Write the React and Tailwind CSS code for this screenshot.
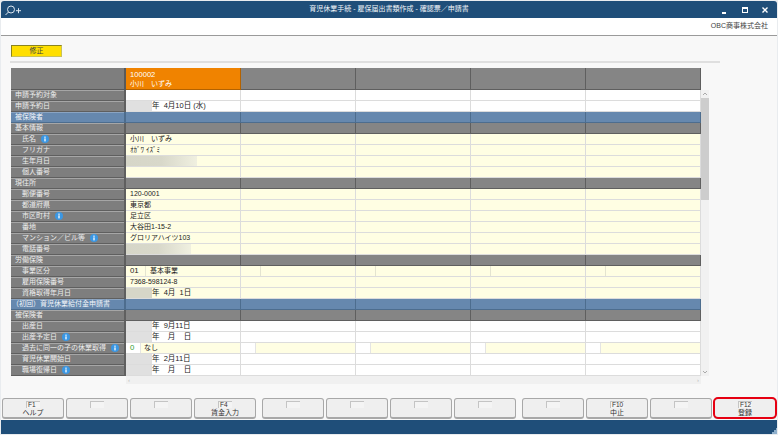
const INFO = true;
const rows = [
  { label: "申請予約対象", kind: "white" },
  { label: "申請予約日", kind: "date", value: "年  4月10日 (水)" },
  { label: "被保険者", kind: "blue" },
  { label: "基本情報", kind: "section" },
  { label: "氏名", kind: "yellow", indent: true, info: INFO, value: "小川　いずみ" },
  { label: "フリガナ", kind: "yellow", indent: true, value: "ｵｶﾞﾜ ｲｽﾞﾐ", size: "text-[6px]" },
  { label: "生年月日", kind: "masked", indent: true, mask: "w-[71px]" },
  { label: "個人番号", kind: "yellow", indent: true },
  { label: "現住所", kind: "section" },
  { label: "郵便番号", kind: "yellow", indent: true, value: "120-0001", size: "text-[7.8px]" },
  { label: "都道府県", kind: "yellow", indent: true, value: "東京都" },
  { label: "市区町村", kind: "yellow", indent: true, info: INFO, value: "足立区" },
  { label: "番地", kind: "yellow", indent: true, value: "大谷田1-15-2" },
  { label: "マンション／ビル等", kind: "yellow", indent: true, info: INFO, value: "グロリアハイツ103" },
  { label: "電話番号", kind: "masked", indent: true, mask: "w-[65px]" },
  { label: "労働保険", kind: "section" },
  { label: "事業区分", kind: "code", indent: true, code: "01", value: "基本事業" },
  { label: "雇用保険番号", kind: "yellow", indent: true, value: "7368-598124-8", size: "text-[7.8px]" },
  { label: "資格取得年月日", kind: "dateYellow", indent: true, value: "年  4月  1日" },
  { label: "（初回）育児休業給付金申請書", kind: "blue", wide: true },
  { label: "被保険者", kind: "section" },
  { label: "出産日", kind: "date", indent: true, value: "年  9月11日" },
  { label: "出産予定日", kind: "date", indent: true, info: INFO, value: "年    月    日" },
  { label: "過去に同一の子の休業取得", kind: "flag", indent: true, info: INFO, code: "0", value: "なし" },
  { label: "育児休業開始日", kind: "date", indent: true, value: "年  2月11日" },
  { label: "職場復帰日", kind: "date", indent: true, info: INFO, value: "年    月    日" },
];

const keys = [
  [{ f: "F1", label: "ヘルプ" }, {}, {}, { f: "F4", label: "賃金入力" }],
  [{}, {}, {}, {}],
  [{}, { f: "F10", label: "中止" }, {}, { f: "F12", label: "登録", hot: true }],
];

function InfoIcon() {
  return (
    <svg viewBox="0 0 10 10" className="ml-[5px] h-[8px] w-[8px] shrink-0">
      <circle cx="5" cy="5" r="5" fill="#3b97e3" />
      <rect x="4.2" y="4.2" width="1.6" height="3.8" fill="#fff" />
      <rect x="4.2" y="2" width="1.6" height="1.5" fill="#fff" />
    </svg>
  );
}

function Cell({ row, first }) {
  const base = "h-[11px] w-[115px] shrink-0 overflow-hidden border-b border-r border-[#dcdcdc] text-[7px] leading-[10px] text-[#222] whitespace-pre";

  if (row.kind === "blue") return <div className="h-[11px] w-[115px] shrink-0 border-r border-b border-[#4d6d8e] bg-[#6688ae]" />;
  if (row.kind === "section") return <div className="h-[11px] w-[115px] shrink-0 border-r border-b border-[#5f5f5f] bg-[#858585]" />;
  if (row.kind === "white") return <div className={`${base} bg-white`} />;
  if (row.kind === "yellow") {
    return <div className={`${base} bg-[#fffee3] pl-[4px] ${row.size || ""}`}>{first ? row.value : ""}</div>;
  }
  if (row.kind === "masked") {
    return (
      <div className={`${base} bg-[#fffee3]`}>
        {first && <div className={`h-[10px] ${row.mask} bg-gradient-to-r from-[#d6d6c8] via-[#d8d8ca] to-[#f0f0e0]`} />}
      </div>
    );
  }
  if (row.kind === "date" || row.kind === "dateYellow") {
    const bg = row.kind === "date" ? "bg-white" : "bg-[#fffee3]";
    return (
      <div className={`${base} ${bg}`}>
        {first && (
          <div className="flex">
            <div className={`h-[10px] w-[26px] shrink-0 ${row.kind === "date" ? "bg-[#e0e0e0]" : "bg-[#d6d6c8]"}`} />
            <span className="text-[7.5px]">{row.value}</span>
          </div>
        )}
      </div>
    );
  }
  if (row.kind === "code") {
    return (
      <div className={`${base} flex bg-[#fffee3]`}>
        <div className="h-[10px] w-[20px] shrink-0 border-r border-[#e4e4d0] pl-[4px] text-[7.8px]">{first ? row.code : ""}</div>
        <div className="pl-[4px]">{first ? row.value : ""}</div>
      </div>
    );
  }
  return (
    <div className={`${base} flex bg-[#fffee3]`}>
      <div className="h-[10px] w-[15px] shrink-0 border-r border-[#e4e4e4] bg-white pl-[4px] text-[7.8px] text-[#2e9e2e]">{first ? row.code : ""}</div>
      <div className="pl-[3px]">{first ? row.value : ""}</div>
    </div>
  );
}

function Row({ row }) {
  const labelBg = row.kind === "blue"
    ? "bg-[#6688ae] text-[#f2f5f9] border-[#4d6d8e] shadow-[inset_0_1px_0_#8aa4c2]"
    : "bg-[#7e7e7e] text-[#ededed] border-[#5f5f5f] shadow-[inset_0_1px_0_#a6a6a6]";
  return (
    <div className="flex">
      <div className={`flex h-[11px] w-[115px] shrink-0 items-center overflow-hidden whitespace-nowrap border-b border-r-2 pb-px text-[7px] leading-none ${labelBg} ${row.indent ? "pl-[11px]" : row.wide ? "pl-px" : "pl-[4px]"}`}>
        {row.label}
        {row.info && <InfoIcon />}
      </div>
      {[0, 1, 2, 3, 4].map((i) => (
        <Cell key={i} row={row} first={i === 0} />
      ))}
    </div>
  );
}

function FKey({ item }) {
  return (
    <button className="relative flex h-[21px] w-[62px] shrink-0 flex-col items-center rounded-[3px] border border-b-2 border-[#a8a8a8] bg-[#efefef] text-[#333]">
      <span className="mt-[2px] h-[7px] w-[14px] border-l border-t border-[#c4c4c4] bg-[#f4f4f4] px-px text-left text-[6.5px] leading-[6px]">{item.f || ""}</span>
      <span className="text-[7px] leading-[9px]">{item.label || ""}</span>
      {item.hot && <span className="absolute -inset-[2px] rounded-[5px] border-[2.5px] border-[#e60012]" />}
    </button>
  );
}

export default function App() {
  return (
    <div className="h-[435px] w-[778px] overflow-hidden bg-[#e9ecef] pl-px pt-[1px] font-['Liberation_Sans','Noto_Sans_CJK_JP',sans-serif]">
      <div className="flex h-[433px] w-[776px] flex-col overflow-hidden rounded-t-[3px] bg-[#f8f8f8]">
        {/* title bar */}
        <div className="relative flex h-[17px] shrink-0 items-center justify-center whitespace-pre bg-[#1f4e79] text-[7px] text-[#f0f4f8]">
          <svg viewBox="0 0 18 13" className="absolute left-[4px] top-[2px] h-[13px] w-[18px]" fill="none" stroke="#dfe8f0" strokeWidth="1">
            <circle cx="6" cy="6.5" r="3.5" />
            <path d="M3.5 9 .5 12M11 7.7h5M13.5 5.2v5" />
          </svg>
          育児休業手続 - 雇保届出書類作成 - 確認票／申請書
          <div className="absolute right-[9px] top-0 flex h-[17px] items-center">
            <span className="mt-[7px] h-[1.5px] w-[4px] bg-white" />
            <span className="ml-[16px] h-[6px] w-[6px] border border-t-2 border-white" />
            <svg viewBox="0 0 6 6" className="ml-[14px] h-[6px] w-[6px]" stroke="#fff" strokeWidth="1.4">
              <path d="M.5.5l5 5M5.5.5l-5 5" />
            </svg>
          </div>
        </div>

        {/* company bar */}
        <div className="flex h-[18px] shrink-0 items-center justify-end border-b border-[#9a9a9a] bg-white pr-[9px] text-[7px] text-[#444]">
          OBC商事株式会社
        </div>

        {/* edit button */}
        <div className="flex shrink-0 flex-col px-[9px] pt-[9px]">
          <div className="ml-px flex h-[12px] w-[51px] items-center justify-center border border-[#c9c25a] border-l-[#8a8420] border-t-[#8a8420] bg-[#ffdf00] text-[7px] text-[#444]">
            修正
          </div>
          <div className="mt-[4px] h-[2px] w-[710px] bg-[#dfdfdf]" />
        </div>

        {/* table */}
        <div className="mt-[5px] flex shrink-0 pl-[10px]">
          <div className="flex w-[690px] flex-col">
            <div className="flex h-[22px]">
              <div className="w-[115px] border-b border-r-2 border-[#5a5a5a] bg-[#7e7e7e]" />
              <div className="w-[115px] border-b border-r border-[#b36200] bg-[#f08300] pl-[4px] pt-[2px] text-[7px] leading-[9px] text-white">
                <div className="text-[7.6px]">100002</div>
                <div>小川　いずみ</div>
              </div>
              {[0, 1, 2, 3].map((i) => (
                <div key={i} className="w-[115px] border-b border-r border-[#5f5f5f] bg-[#858585]" />
              ))}
            </div>
            {rows.map((row, i) => (
              <Row key={i} row={row} />
            ))}
            <div className="ml-[115px] flex h-[8px] items-center justify-between bg-[#f0f0f0] px-[2px] text-[6px] leading-none text-[#bbb]">
              <span>‹</span>
              <span>›</span>
            </div>
          </div>
          <div className="mt-[22px] flex h-[286px] w-[8px] flex-col bg-[#f1f1f1]">
            <svg viewBox="0 0 8 8" className="h-[8px] w-[8px] shrink-0" fill="none" stroke="#aaa">
              <path d="M2 5l2-2 2 2" />
            </svg>
            <div className="h-[102px] bg-[#cdcdcd]" />
            <svg viewBox="0 0 8 8" className="mt-auto h-[8px] w-[8px] shrink-0" fill="none" stroke="#aaa">
              <path d="M2 3l2 2 2-2" />
            </svg>
          </div>
        </div>

        {/* function keys */}
        <div className="mt-[14px] flex shrink-0 pl-px">
          {keys.map((group, g) => (
            <div key={g} className={`flex gap-[2px] ${g === 0 ? "" : "ml-[6px]"}`}>
              {group.map((item, i) => (
                <FKey key={i} item={item} />
              ))}
            </div>
          ))}
        </div>

        {/* status bar */}
        <div className="relative mt-px flex-1 bg-[#1f4e79]">
          <div className="absolute bottom-0 right-0 h-[6px] w-[6px] bg-gradient-to-br from-[#1f4e79] from-50% to-[#8fb0cc] to-50%" />
        </div>
      </div>
    </div>
  );
}
